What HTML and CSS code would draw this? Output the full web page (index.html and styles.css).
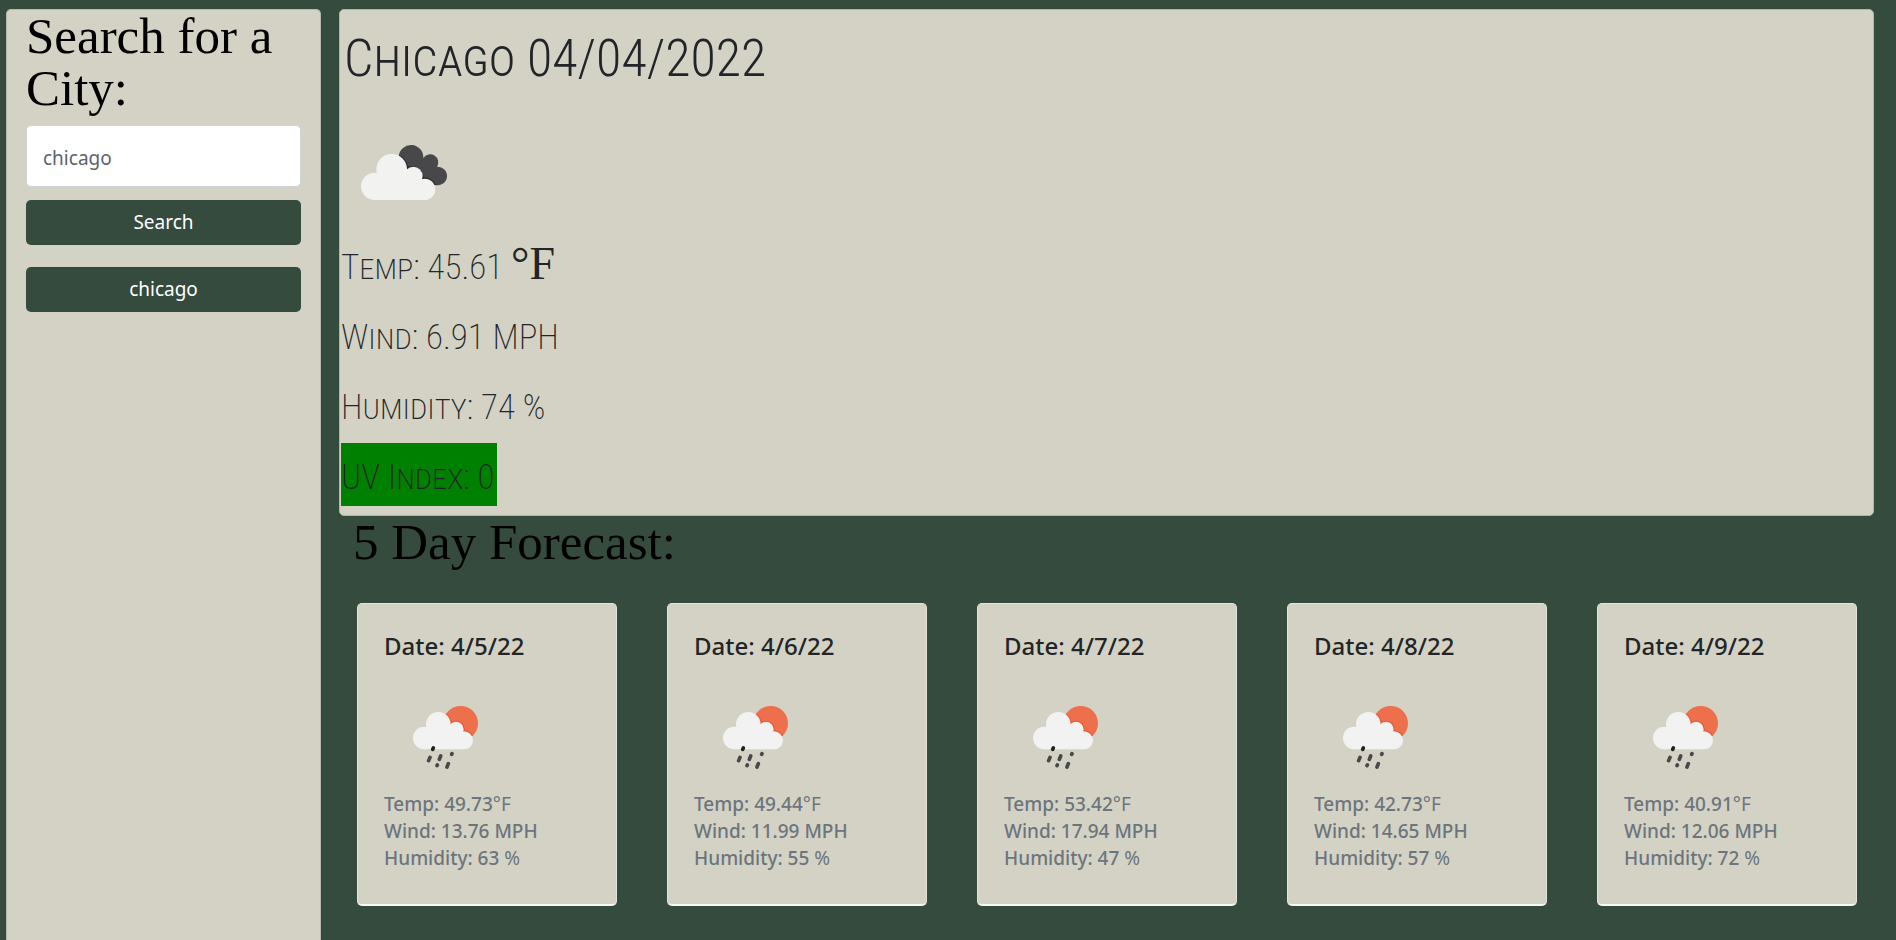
FILE: index.html
```html
<!DOCTYPE html>
<html lang="en">
<head>
<meta charset="utf-8">
<title>Weather Dashboard</title>
<link rel="stylesheet" href="styles.css">
</head>
<body>
<svg class="sprite" aria-hidden="true">
  <clipPath id="sun-clip"><circle cx="182" cy="100" r="52"/></clipPath>
  <symbol id="rain" viewBox="-48 -87 375 375">
    <circle cx="182" cy="100" r="52" fill="#ee6f4c"/>
    <g clip-path="url(#sun-clip)" fill="#e8502f">
      <circle cx="115" cy="103" r="40"/>
      <circle cx="168" cy="118" r="26"/>
      <circle cx="192" cy="151" r="30"/>
    </g>
    <g fill="#f2f2f2">
      <circle cx="73" cy="144" r="34"/>
      <circle cx="115" cy="103" r="37"/>
      <circle cx="168" cy="118" r="23"/>
      <circle cx="192" cy="151" r="27"/>
      <path d="M73 178V130L115 110L168 118L192 140V178Z"/>
    </g>
    <g stroke="#48484a" stroke-width="11" stroke-linecap="round">
      <path d="M98 178L100 174" stroke="#222"/>
      <path d="M86 212L90 202M118 208L122 198M155 193L156 191M111 227L112 225M141 231L145 221"/>
    </g>
  </symbol>
</svg>
<div class="page">
  <aside class="sidebar">
    <h1 class="heading">Search for a City:</h1>
    <form class="search">
      <input class="search-input" type="text" placeholder="chicago" aria-label="City">
      <button class="btn" type="button">Search</button>
    </form>
    <button class="btn" type="button">chicago</button>
  </aside>
  <main>
    <section class="current">
      <h2 class="city">Chicago 04/04/2022</h2>
      <svg class="icon" viewBox="33 324 375 375" role="img" aria-label="Broken clouds">
        <path fill="#48484a" d="M206 470A37 37 0 0 1 280 474A23 23 0 0 1 321 500A28 28 0 1 1 316 555L240 560Z"/>
        <g fill="#2b2b2d">
          <path d="M207 465Q229 474 234 500Q270 490 282 532Q304 533 319 555L240 560Z"/>
        </g>
        <g fill="#f2f2f0">
          <circle cx="134" cy="559" r="41"/>
          <circle cx="185" cy="508" r="46"/>
          <circle cx="250" cy="528" r="28"/>
          <circle cx="284" cy="568" r="32"/>
          <path d="M134 600V540L185 508L250 510L284 550V600Z"/>
        </g>
      </svg>
      <p class="reading">Temp: 45.61 <span class="unit">°F</span></p>
      <p class="reading">Wind: 6.91 MPH</p>
      <p class="reading">Humidity: 74 %</p>
      <p class="reading uv">UV Index: 0</p>
    </section>
    <section class="forecast">
      <h2 class="heading">5 Day Forecast:</h2>
      <div class="days">
        <article class="day">
          <h3 class="date">Date: 4/5/22</h3>
          <svg class="icon"><use href="#rain"/></svg>
          <p class="stat">Temp: 49.73<span class="light">°F</span></p>
          <p class="stat">Wind: 13.76 MPH</p>
          <p class="stat">Humidity: 63 <span class="light">%</span></p>
        </article>
        <article class="day">
          <h3 class="date">Date: 4/6/22</h3>
          <svg class="icon"><use href="#rain"/></svg>
          <p class="stat">Temp: 49.44<span class="light">°F</span></p>
          <p class="stat">Wind: 11.99 MPH</p>
          <p class="stat">Humidity: 55 <span class="light">%</span></p>
        </article>
        <article class="day">
          <h3 class="date">Date: 4/7/22</h3>
          <svg class="icon"><use href="#rain"/></svg>
          <p class="stat">Temp: 53.42<span class="light">°F</span></p>
          <p class="stat">Wind: 17.94 MPH</p>
          <p class="stat">Humidity: 47 <span class="light">%</span></p>
        </article>
        <article class="day">
          <h3 class="date">Date: 4/8/22</h3>
          <svg class="icon"><use href="#rain"/></svg>
          <p class="stat">Temp: 42.73<span class="light">°F</span></p>
          <p class="stat">Wind: 14.65 MPH</p>
          <p class="stat">Humidity: 57 <span class="light">%</span></p>
        </article>
        <article class="day">
          <h3 class="date">Date: 4/9/22</h3>
          <svg class="icon"><use href="#rain"/></svg>
          <p class="stat">Temp: 40.91<span class="light">°F</span></p>
          <p class="stat">Wind: 12.06 MPH</p>
          <p class="stat">Humidity: 72 <span class="light">%</span></p>
        </article>
      </div>
    </section>
  </main>
</div>
</body>
</html>
```
FILE: styles.css
```css
* { box-sizing: border-box; }
body {
  margin: 0;
  background: #354b3e;
  color: #212529;
  font: 19px/27px "Noto Sans", "Open Sans", sans-serif;
}
h1, h2, h3, p { margin: 0; font-weight: 400; }
.sprite { position: absolute; width: 0; height: 0; }
.page {
  display: grid;
  grid-template-columns: 63fr 307fr;
  gap: 18px;
  min-height: 100vh;
  padding: 9px 22px 0 6px;
}
.sidebar {
  display: flex;
  flex-direction: column;
  gap: 22px;
  padding: 0 19px;
  background: #d4d2c4;
  border: 1px solid #b9b7ab;
  border-bottom: 0;
  border-radius: 5px 5px 0 0;
}
.sidebar .heading { margin-bottom: -11px; }
.heading {
  color: #000;
  font: 400 51px/52px "Liberation Serif", serif;
}
.search { display: flex; flex-direction: column; gap: 13px; }
.search-input {
  width: 100%;
  height: 62px;
  padding: 4px 16px 0;
  background: #fff;
  border: 1px solid #ced4da;
  border-radius: 5px;
  font: inherit;
}
.search-input::placeholder { color: #5c636a; opacity: 1; }
.btn {
  width: 100%;
  height: 45px;
  border: 0;
  border-radius: 5px;
  background: #354b3e;
  color: #fff;
  font: inherit;
}
.current {
  padding: 0 1px 9px;
  background: #d4d2c4;
  border: 1px solid #b3b4a6;
  border-radius: 5px;
}
.city {
  padding: 4px 3px;
  font: small-caps 300 52px/90px "Roboto Condensed", "Liberation Sans Narrow", sans-serif;
}
.icon { display: block; width: 125px; height: 125px; }
.reading {
  width: fit-content;
  margin-bottom: 7px;
  padding-top: 6px;
  font: small-caps 200 35px/57px "Roboto Condensed", "Liberation Sans Narrow", sans-serif;
}
.unit { font: 400 46px/46px "Liberation Serif", serif; }
.uv { padding-right: 2px; margin-bottom: 0; background: #008000; }
.forecast { padding: 0 17px 34px 18px; }
.forecast .heading { margin: 0 0 35px -4px; }
.days {
  display: grid;
  grid-template-columns: repeat(5, 1fr);
  gap: 50px;
}
.day {
  padding: 27px 26px 32px;
  background: #d4d2c4;
  border: 1px solid #e4e3dc;
  border-bottom: 2px solid #f8f8f6;
  border-radius: 5px;
}
.date { font-size: 24px; line-height: 30px; font-weight: 500; }
.day .icon { margin-bottom: 5px; }
.stat { color: #6c757d; font-weight: 500; }
.light { font-weight: 400; }
```
